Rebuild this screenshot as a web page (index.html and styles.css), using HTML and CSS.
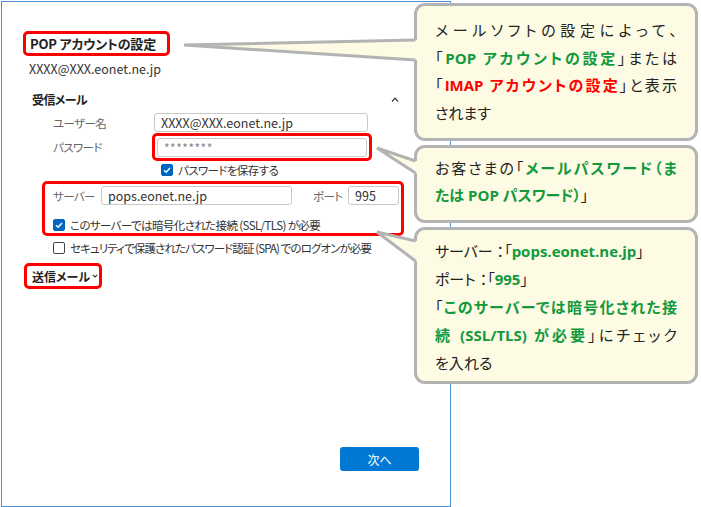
FILE: index.html
```html
<!DOCTYPE html>
<html lang="ja">
<head>
    <meta charset="UTF-8">
    <title>POP アカウントの設定</title>
    <link rel="stylesheet" href="styles.css">
</head>
<body>

<div class="window">
    <div class="mark title">POP アカウントの設定</div>
    <div class="account">XXXX@XXX.eonet.ne.jp</div>

    <div class="section-head">
        <span>受信メール</span>
        <svg width="8" height="5" viewBox="0 0 8 5"><polyline points="1,4.5 4,1.2 7,4.5" fill="none" stroke="#333" stroke-width="1.2"/></svg>
    </div>

    <div class="field-row user-row">
        <span class="label">ユーザー名</span>
        <span class="input user">XXXX@XXX.eonet.ne.jp</span>
    </div>
    <div class="field-row pw-row">
        <span class="label">パスワード</span>
        <span class="mark pw-mark"><span class="input pw">********</span></span>
    </div>
    <div class="check-row save">
        <span class="check on"><svg width="10" height="10" viewBox="0 0 10 10"><polyline points="2,5.2 4.2,7.2 8,3" fill="none" stroke="#fff" stroke-width="1.5"/></svg></span>
        <span>パスワードを保存する</span>
    </div>

    <div class="mark server-box">
        <div class="server-row">
            <span class="label">サーバー</span>
            <span class="input server">pops.eonet.ne.jp</span>
            <span class="label port-label">ポート</span>
            <span class="input port">995</span>
        </div>
        <div class="check-row ssl">
            <span class="check on"><svg width="10" height="10" viewBox="0 0 10 10"><polyline points="2,5.2 4.2,7.2 8,3" fill="none" stroke="#fff" stroke-width="1.5"/></svg></span>
            <span>このサーバーでは暗号化された接続 (SSL/TLS) が必要</span>
        </div>
    </div>
    <div class="check-row spa">
        <span class="check"></span>
        <span>セキュリティで保護されたパスワード認証 (SPA) でのログオンが必要</span>
    </div>

    <div class="mark send">
        <span>送信メール</span>
        <svg width="6" height="4" viewBox="0 0 6 4"><polyline points="0.8,0.8 3,3 5.2,0.8" fill="none" stroke="#333" stroke-width="1.1"/></svg>
    </div>

    <button class="next">次へ</button>
</div>

<!-- callouts -->
<div class="callout c1">
    <div class="j">メールソフトの設定によって、</div>
    <div class="j">「<span class="g">POP アカウントの設定</span>」または</div>
    <div class="j">「<span class="r">IMAP アカウントの設定</span>」と表示</div>
    <div>されます</div>
</div>

<div class="callout c2">
    <div class="j">お客さまの「<span class="g">メールパスワード（ま</span></div>
    <div><span class="g">たは POP パスワード）</span>」</div>
</div>

<div class="callout c3">
    <div>サーバー ：「<span class="g">pops.eonet.ne.jp</span>」</div>
    <div>ポート ：「<span class="g">995</span>」</div>
    <div class="j">「<span class="g">このサーバーでは暗号化された接</span></div>
    <div class="j"><span class="g">続 (SSL/TLS) が必要</span>」にチェック</div>
    <div>を入れる</div>
</div>

<svg class="tails" width="701" height="507" viewBox="0 0 701 507">
    <polygon points="184,45 415.5,40 418.5,40 418.5,60 415.5,60" fill="#fdfbe3"/>
    <polyline points="415.5,40 184,45 415.5,60" fill="none" stroke="#b3b3b3" stroke-width="3"/>
    <polygon points="377,148 415.5,161 418.5,161 418.5,173 415.5,173" fill="#fdfbe3"/>
    <polyline points="415.5,161 377,148 415.5,173" fill="none" stroke="#b3b3b3" stroke-width="3"/>
    <polygon points="377,232 415.5,241 418.5,241 418.5,261 415.5,261" fill="#fdfbe3"/>
    <polyline points="415.5,241 377,232 415.5,261" fill="none" stroke="#b3b3b3" stroke-width="3"/>
</svg>

</body>
</html>
```

FILE: styles.css
```css
body {
    margin: 0;
    width: 701px;
    height: 507px;
    position: relative;
    overflow: hidden;
    background-color: #fff;
    font-family: "Noto Sans CJK JP", sans-serif;
    color: #333;
}

.window {
    box-sizing: border-box;
    width: 450px;
    height: 506px;
    margin: 1px 0 0 1px;
    border: 1px solid #4b8fd6;
    font-size: 11.5px;
    letter-spacing: -0.6px;
    white-space: nowrap;
    font-feature-settings: "palt";
}

.mark {
    box-sizing: border-box;
    border: 3px solid #f00;
    border-radius: 5px;
}

.title {
    display: flex;
    align-items: center;
    width: 147px;
    height: 25px;
    margin: 29px 0 0 21px;
    padding-left: 4px;
    font-size: 13px;
    font-weight: bold;
    letter-spacing: -0.2px;
    color: #222;
}

.account {
    margin: 5px 0 0 27px;
    line-height: 16px;
    font-size: 12.5px;
    letter-spacing: 0;
}

.section-head {
    display: flex;
    align-items: center;
    justify-content: space-between;
    width: 367px;
    height: 18px;
    margin: 13px 0 0 30px;
    font-size: 12px;
    font-weight: bold;
    color: #222;
}

.field-row {
    display: flex;
    align-items: center;
    margin-left: 51px;
}

.user-row {
    margin-top: 5px;
}

.pw-row {
    margin-top: 1px;
}

.label {
    width: 101px;
    flex: none;
    color: #666;
}

.input {
    box-sizing: border-box;
    display: flex;
    align-items: center;
    height: 19px;
    padding-left: 6px;
    border: 1px solid #c9c9c9;
    border-radius: 3px;
    background-color: #fff;
    flex: none;
    font-size: 12.5px;
    letter-spacing: 0;
}

.user {
    width: 214px;
}

.pw-mark {
    width: 220px;
    margin-left: -2px;
    padding: 2px 2px 1px;
}

.pw {
    width: 210px;
    color: #888;
    font-size: 12px;
    letter-spacing: 0.5px;
}

.check-row {
    display: flex;
    align-items: center;
    gap: 5px;
    line-height: 16px;
}

.check {
    box-sizing: border-box;
    display: flex;
    align-items: center;
    justify-content: center;
    width: 12px;
    height: 12px;
    border: 1px solid #444;
    border-radius: 2px;
    flex: none;
}

.check.on {
    background-color: #0067c0;
    border-color: #0067c0;
}

.save {
    margin: 1px 0 0 159px;
}

.server-box {
    width: 362px;
    height: 55px;
    margin: 3px 0 0 40px;
    padding: 2px 0 0 8px;
}

.server-row {
    display: flex;
    align-items: center;
}

.server-row .label {
    width: 48px;
}

.server {
    width: 191px;
}

.server-row .port-label {
    width: 35px;
    margin-left: 21px;
}

.port {
    width: 51px;
}

.ssl {
    margin-top: 13px;
    line-height: 14px;
}

.spa {
    margin: 4px 0 0 51px;
    letter-spacing: -0.9px;
}

.send {
    display: flex;
    align-items: center;
    gap: 2px;
    width: 78px;
    height: 26px;
    margin: 7px 0 0 22px;
    padding-left: 5px;
    font-size: 12px;
    font-weight: bold;
    letter-spacing: 0;
    color: #222;
}

.next {
    display: block;
    width: 79px;
    height: 24px;
    margin: 158px 0 0 338px;
    padding: 0;
    border: none;
    border-radius: 3px;
    background-color: #0078d4;
    color: #fff;
    font-family: inherit;
    font-size: 12px;
    letter-spacing: 0;
}

.callout {
    position: absolute;
    left: 414px;
    width: 284px;
    box-sizing: border-box;
    padding: 0 18px;
    background-color: #fdfbe3;
    border: 3px solid #b3b3b3;
    border-radius: 11px;
    color: #222;
    font-family: "Open Sans", "Noto Sans CJK JP", sans-serif;
    font-size: 15px;
    font-feature-settings: "palt";
    z-index: 1;
}

.c1 {
    top: 3px;
    height: 138px;
    padding-top: 11px;
    line-height: 27.5px;
}

.c2 {
    top: 145px;
    height: 78px;
    padding-top: 7px;
    line-height: 27px;
}

.c3 {
    top: 227px;
    height: 157px;
    padding-top: 7px;
    line-height: 28px;
}

.j {
    text-align: justify;
    text-align-last: justify;
}

.g {
    color: #12993d;
    font-weight: bold;
}

.r {
    color: #f00;
    font-weight: bold;
}

.tails {
    position: absolute;
    left: 0;
    top: 0;
    z-index: 2;
    pointer-events: none;
}
```
